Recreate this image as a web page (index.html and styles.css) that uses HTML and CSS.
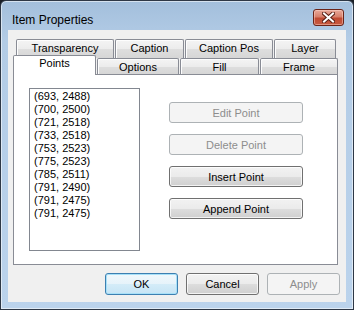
FILE: index.html
```html
<!DOCTYPE html>
<html>
<head>
<meta charset="utf-8">
<link rel="stylesheet" href="styles.css">
</head>
<body>
<div class="window">
  <div class="titlebar">
    <span class="title">Item Properties</span>
    <button class="close" aria-label="Close">
      <svg width="13" height="11" viewBox="0 0 13 11">
        <path d="M2 1.5 L11 9.5 M11 1.5 L2 9.5" stroke="#5a2016" stroke-width="4" stroke-linecap="square" fill="none"/>
        <path d="M2 1.5 L11 9.5 M11 1.5 L2 9.5" stroke="#ffffff" stroke-width="2" stroke-linecap="square" fill="none"/>
      </svg>
    </button>
  </div>
  <div class="client">
    <div class="tabs">
      <div class="tabrow back">
        <div class="tab t-transparency">Transparency</div>
        <div class="tab t-caption">Caption</div>
        <div class="tab t-captionpos">Caption Pos</div>
        <div class="tab t-layer">Layer</div>
      </div>
      <div class="tabrow front">
        <div class="tab selected t-points">Points</div>
        <div class="tab t-options">Options</div>
        <div class="tab t-fill">Fill</div>
        <div class="tab t-frame">Frame</div>
      </div>
    </div>
    <div class="page">
      <div class="listbox">
        <div>(693, 2488)</div>
        <div>(700, 2500)</div>
        <div>(721, 2518)</div>
        <div>(733, 2518)</div>
        <div>(753, 2523)</div>
        <div>(775, 2523)</div>
        <div>(785, 2511)</div>
        <div>(791, 2490)</div>
        <div>(791, 2475)</div>
        <div>(791, 2475)</div>
      </div>
      <div class="actions">
        <button class="btn wide" disabled>Edit Point</button>
        <button class="btn wide" disabled>Delete Point</button>
        <button class="btn wide">Insert Point</button>
        <button class="btn wide">Append Point</button>
      </div>
    </div>
    <div class="footer">
      <button class="btn small default">OK</button>
      <button class="btn small">Cancel</button>
      <button class="btn small" disabled>Apply</button>
    </div>
  </div>
</div>
</body>
</html>
```
FILE: styles.css
```css
* { box-sizing: border-box; }
html, body { margin: 0; padding: 0; background: #1a1f26; }
body { width: 354px; height: 310px; overflow: hidden; }

.window {
  width: 354px;
  height: 310px;
  border: 1px solid #2e3846;
  border-radius: 6px 6px 0 0;
  background: linear-gradient(to bottom, #a3bfdc 0px, #b3cce6 40px, #bbd3ec 100%);
  box-shadow: inset 0 0 0 1px rgba(255,255,255,0.55);
  display: flex;
  flex-direction: column;
  font-family: "Liberation Sans", Arial, sans-serif;
  font-size: 11px;
  color: #000;
}

.titlebar {
  height: 29px;
  display: flex;
  align-items: flex-start;
  padding-left: 11px;
  padding-right: 9px;
}
.title {
  font-family: "Liberation Sans", Arial, sans-serif;
  font-size: 12px;
  margin-top: 12px;
  line-height: 14px;
  flex: 1;
}
.close {
  margin-top: 8px;
  width: 31px;
  height: 17px;
  padding: 0;
  border: 1px solid #6b2418;
  border-radius: 3px;
  background: linear-gradient(to bottom, #e9a99a 0%, #d7806c 45%, #c04a33 55%, #c75a40 100%);
  box-shadow: inset 0 0 0 1px rgba(255,220,210,0.45);
  display: flex;
  align-items: center;
  justify-content: center;
}
.close svg { display: block; }

.client {
  margin: 0 7px 7px 7px;
  height: 272px;
  background: #f0f0f0;
  display: flex;
  flex-direction: column;
}

.tabs { padding-top: 9px; margin-left: 5px; width: 325px; }
.tabrow { display: flex; }
.tabrow.back { margin-left: 3px; height: 19px; column-gap: 1px; }
.tabrow.front { height: 16px; align-items: flex-end; column-gap: 1px; }

.tab {
  border: 1px solid #898c95;
  border-bottom: none;
  border-radius: 2px 2px 0 0;
  background: linear-gradient(to bottom, #f4f4f4 0%, #ececec 50%, #dedede 51%, #d6d6d6 100%);
  box-shadow: inset 1px 1px 0 #fdfdfd;
  text-align: center;
  line-height: 15px;
  padding-top: 1px;
  white-space: nowrap;
}
.tabrow.back .tab { height: 19px; }
.tabrow.front .tab { height: 16px; line-height: 14px; }
.tab.selected {
  position: relative;
  z-index: 1;
  background: #fff;
  box-shadow: none;
  margin-bottom: -1px;
}
.tabrow.front .tab.selected { height: 20px; line-height: 12px; }

.t-transparency { width: 98px; }
.t-caption { width: 69px; }
.t-captionpos { width: 88px; }
.t-layer { width: 62px; }
.t-points { width: 83px; }
.t-options { width: 82px; }
.t-fill { width: 79px; }
.t-frame { width: 78px; }

.page {
  margin-left: 5px;
  width: 325px;
  height: 191px;
  border: 1px solid #898c95;
  background: #fff;
  display: flex;
  align-items: flex-start;
  padding: 13px 0 0 15px;
}

.listbox {
  width: 111px;
  height: 163px;
  border: 1px solid #828790;
  background: #fff;
  padding: 1px 0 0 4px;
  line-height: 13px;
}

.actions {
  margin-left: 29px;
  margin-top: 14px;
  display: flex;
  flex-direction: column;
  row-gap: 11px;
}

.btn {
  font-family: "Liberation Sans", Arial, sans-serif;
  font-size: 11px;
  color: #000;
  height: 21px;
  padding: 0;
  border: 1px solid #707070;
  border-radius: 3px;
  background: linear-gradient(to bottom, #f2f2f2 0%, #ebebeb 50%, #dddddd 51%, #cfcfcf 100%);
  box-shadow: inset 0 0 0 1px rgba(255,255,255,0.75);
}
.btn:disabled {
  color: #8d8d8d;
  border-color: #adb2b5;
  background: #f4f4f4;
  box-shadow: none;
}
.btn.wide { width: 134px; }
.btn.small { width: 73px; height: 22px; }
.btn.default {
  border-color: #3c7fb1;
  box-shadow: inset 0 0 0 1px #a7e0f8;
  background: linear-gradient(to bottom, #f0f8fc 0%, #e6f3fa 50%, #d4ecf8 51%, #c6e4f5 100%);
}

.footer {
  margin-top: 8px;
  display: flex;
  justify-content: flex-end;
  column-gap: 8px;
  padding-right: 6px;
}
```
